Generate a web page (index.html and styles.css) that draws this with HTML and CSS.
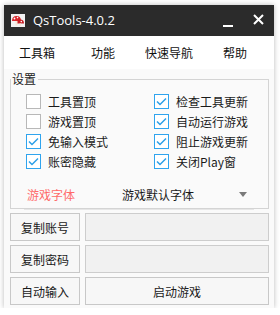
FILE: index.html
```html
<!DOCTYPE html>
<html>
<head>
<meta charset="utf-8">
<link rel="stylesheet" href="styles.css">
</head>
<body>
<div class="window">
  <div class="titlebar">
    <svg class="logo" width="14" height="13" viewBox="0 0 14 13">
      <rect x="0" y="0" width="14" height="13" fill="#f2f2f2"/>
      <path d="M1 7 Q1 2 5.5 2 Q10 2 10 7 Z" fill="#d9252a"/>
      <path d="M5.5 9.5 Q5.5 5.5 9.3 5.5 Q13 5.5 13 9.5 Z" fill="#c81e24"/>
      <rect x="4.5" y="7" width="2" height="4.5" fill="#f6e7d8"/>
      <rect x="8.5" y="9.5" width="1.6" height="2.5" fill="#f6e7d8"/>
      <circle cx="3.5" cy="4.5" r="0.9" fill="#fff"/>
      <circle cx="6.5" cy="3.6" r="0.8" fill="#fff"/>
      <circle cx="10.3" cy="7.6" r="0.8" fill="#fff"/>
    </svg>
    <span class="title">QsTools-4.0.2</span>
    <span class="spacer"></span>
    <svg class="btn-min" width="11" height="11" viewBox="0 0 11 11"><rect x="0" y="8" width="10" height="2" fill="#fff"/></svg>
    <svg class="btn-close" width="11" height="11" viewBox="0 0 11 11"><path d="M1 1 L10 10 M10 1 L1 10" stroke="#fff" stroke-width="2"/></svg>
  </div>
  <div class="menubar">
    <span>工具箱</span><span>功能</span><span>快速导航</span><span>帮助</span>
  </div>
  <fieldset class="group">
    <legend>设置</legend>
    <div class="checks">
      <label class="chk"><span class="box"></span>工具置顶</label>
      <label class="chk"><span class="box on"><svg width="11" height="9" viewBox="0 0 11 9"><path d="M1 4.5 L4 7.5 L10 1.5" fill="none" stroke="#2a9fe8" stroke-width="1.5"/></svg></span>检查工具更新</label>
      <label class="chk"><span class="box"></span>游戏置顶</label>
      <label class="chk"><span class="box on"><svg width="11" height="9" viewBox="0 0 11 9"><path d="M1 4.5 L4 7.5 L10 1.5" fill="none" stroke="#2a9fe8" stroke-width="1.5"/></svg></span>自动运行游戏</label>
      <label class="chk"><span class="box on"><svg width="11" height="9" viewBox="0 0 11 9"><path d="M1 4.5 L4 7.5 L10 1.5" fill="none" stroke="#2a9fe8" stroke-width="1.5"/></svg></span>免输入模式</label>
      <label class="chk"><span class="box on"><svg width="11" height="9" viewBox="0 0 11 9"><path d="M1 4.5 L4 7.5 L10 1.5" fill="none" stroke="#2a9fe8" stroke-width="1.5"/></svg></span>阻止游戏更新</label>
      <label class="chk"><span class="box on"><svg width="11" height="9" viewBox="0 0 11 9"><path d="M1 4.5 L4 7.5 L10 1.5" fill="none" stroke="#2a9fe8" stroke-width="1.5"/></svg></span>账密隐藏</label>
      <label class="chk"><span class="box on"><svg width="11" height="9" viewBox="0 0 11 9"><path d="M1 4.5 L4 7.5 L10 1.5" fill="none" stroke="#2a9fe8" stroke-width="1.5"/></svg></span>关闭Play窗</label>
    </div>
    <div class="fontrow">
      <span class="fontlabel">游戏字体</span>
      <span class="fontval">游戏默认字体</span>
      <span class="arrow"></span>
    </div>
  </fieldset>
  <div class="actions">
    <div class="row"><button class="btn">复制账号</button><div class="field"></div></div>
    <div class="row"><button class="btn">复制密码</button><div class="field"></div></div>
    <div class="row"><button class="btn">自动输入</button><button class="btn wide">启动游戏</button></div>
  </div>
</div>
</body>
</html>
```
FILE: styles.css
```css
* { box-sizing: border-box; }
html, body { margin: 0; padding: 0; background: #ffffff; }
body {
  font-family: "Noto Sans CJK SC", "Noto Sans", sans-serif;
  font-size: 12px;
  color: #1a1a1a;
}
.window {
  margin: 5px 0 0 4px;
  width: 270px;
  height: 303px;
  background: #fafafa;
  box-shadow: 0 0 5px rgba(0,0,0,0.28);
  display: flex;
  flex-direction: column;
}
.titlebar {
  height: 31px;
  background: #2b2b2b;
  display: flex;
  align-items: center;
  padding-left: 7px;
}
.logo { display: block; }
.title {
  color: #ffffff;
  font-family: "Open Sans", "Noto Sans", sans-serif;
  font-size: 13px;
  margin-left: 8px;
  margin-top: -1px;
}
.spacer { flex: 1; }
.btn-min { margin-right: 19px; margin-top: 4px; }
.btn-close { margin-right: 10px; margin-top: -2px; }
.menubar {
  height: 33px;
  background: #ffffff;
  display: grid;
  grid-template-columns: repeat(4, 66px);
  align-items: center;
  font-size: 12px;
  color: #111;
}
.menubar span { text-align: center; }
.group {
  margin: 3px 5px 0 6px;
  padding: 0;
  border: 1px solid #d4d4d4;
  height: 137px;
  min-width: 0;
}
.group legend {
  padding: 0 2px 0 1px;
  margin-left: 0;
  font-size: 12px;
  color: #222;
  line-height: 14px;
}
.checks {
  display: grid;
  grid-template-columns: 128px 110px;
  padding: 5px 0 0 15px;
}
.chk {
  height: 20px;
  display: flex;
  align-items: center;
  gap: 7px;
  color: #1a1a1a;
}
.box {
  width: 15px;
  height: 15px;
  border: 1px solid #b8b8b8;
  background: #ffffff;
  display: flex;
  align-items: center;
  justify-content: center;
}
.box.on { border-color: #2fa4ee; }
.box svg { display: block; }
.fontrow {
  margin: 8px 14px 0 13px;
  height: 31px;
  border-bottom: 1px solid #e6e6e6;
  display: flex;
  align-items: center;
}
.fontlabel { color: #ff6a6a; width: 98px; padding-left: 3px; }
.fontval { flex: 1; color: #1a1a1a; }
.arrow {
  width: 0; height: 0;
  border-left: 4px solid transparent;
  border-right: 4px solid transparent;
  border-top: 5px solid #7a7a7a;
  margin-right: 7px;
  margin-top: 1px;
}
.actions {
  margin: 4px 5px 0 6px;
  display: flex;
  flex-direction: column;
  gap: 4px;
}
.row { display: flex; gap: 5px; height: 28px; }
.btn {
  width: 70px;
  height: 28px;
  border: 1px solid #c8c8c8;
  background: #f7f7f7;
  font-family: "Noto Sans CJK SC", "Noto Sans", sans-serif;
  font-size: 12px;
  color: #1a1a1a;
  padding: 0;
}
.btn.wide { flex: 1; width: auto; }
.field {
  flex: 1;
  border: 1px solid #cdcdcd;
  background: #f1f1f1;
}
```
